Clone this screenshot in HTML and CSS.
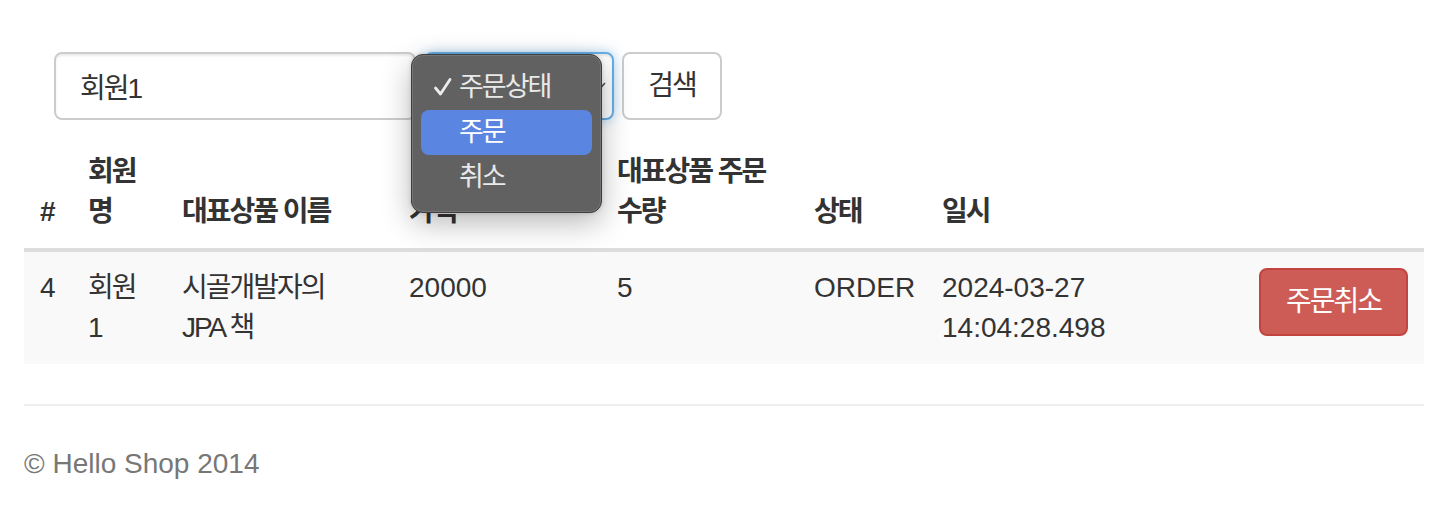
FILE: index.html
```html
<!DOCTYPE html>
<html lang="ko">
<head>
<meta charset="utf-8">
<title>Hello Shop</title>
<link rel="stylesheet" href="styles.css">
</head>
<body>
<div class="page">
  <div class="search">
    <form class="form-inline">
      <input class="form-control input-name ko" type="text" value="회원1">
      <div class="select-wrap">
        <select class="form-control select ko">
          <option>주문상태</option>
          <option>주문</option>
          <option>취소</option>
        </select>
        <svg class="chev" width="12" height="8" viewBox="0 0 12 8"><polyline points="1,1 6,6.5 11,1" fill="none" stroke="#555" stroke-width="1.6"/></svg>
        <div class="menu">
          <div class="menu-item ko">
            <svg class="check" width="20" height="20" viewBox="0 0 20 20"><polyline points="2.5,11 7.5,17 17,2.5" fill="none" stroke="#ececec" stroke-width="2.8" stroke-linecap="round" stroke-linejoin="round"/></svg>
            주문상태
          </div>
          <div class="menu-item active ko">주문</div>
          <div class="menu-item ko">취소</div>
        </div>
      </div>
      <button class="btn btn-default ko" type="button">검색</button>
    </form>
  </div>

  <table class="table">
    <colgroup>
      <col class="c1"><col class="c2"><col class="c3"><col class="c4"><col class="c5"><col class="c6"><col class="c7"><col class="c8">
    </colgroup>
    <thead>
      <tr>
        <th>#</th>
        <th class="ko">회원명</th>
        <th class="ko">대표상품 이름</th>
        <th class="ko">가격</th>
        <th class="ko">대표상품 주문 수량</th>
        <th class="ko">상태</th>
        <th class="ko">일시</th>
        <th></th>
      </tr>
    </thead>
    <tbody>
      <tr>
        <td>4</td>
        <td class="ko narrow">회원1</td>
        <td class="ko narrow">시골개발자의 JPA 책</td>
        <td>20000</td>
        <td>5</td>
        <td>ORDER</td>
        <td>2024-03-27 14:04:28.498</td>
        <td><button class="btn btn-danger ko" type="button">주문취소</button></td>
      </tr>
    </tbody>
  </table>

  <div class="footer">
    <p>© Hello Shop 2014</p>
  </div>
</div>
</body>
</html>
```

FILE: styles.css
```css
* { box-sizing: border-box; }

html, body {
  margin: 0;
  padding: 0;
  background: #fff;
}

body {
  font-family: "Liberation Sans", "Noto Sans CJK KR", Arial, sans-serif;
  font-size: 28px;
  line-height: 40px;
  color: #333;
}

.ko { letter-spacing: -2px; }

.page {
  width: 1400px;
  margin-left: 24px;
}

.search {
  padding: 52px 0 0 30px;
}

.form-inline {
  display: flex;
  align-items: center;
  gap: 8px;
  margin: 0;
}

.form-control {
  height: 68px;
  font-family: inherit;
  font-size: 28px;
  color: #555;
  background: #fff;
  border: 2px solid #ccc;
  border-radius: 8px;
  box-shadow: inset 0 2px 2px rgba(0,0,0,.075);
}

.input-name {
  width: 362px;
  padding: 0 24px;
  color: #333;
}

.select-wrap {
  position: relative;
  width: 190px;
  height: 68px;
}

.select {
  appearance: none;
  -webkit-appearance: none;
  width: 100%;
  padding: 0 24px;
  border-color: #66afe9;
  outline: none;
  box-shadow: inset 0 2px 2px rgba(0,0,0,.075), 0 0 12px rgba(102,175,233,.5);
}

.chev {
  position: absolute;
  right: 8px;
  top: 30px;
}

.menu {
  position: absolute;
  left: -13px;
  top: 2px;
  width: 191px;
  padding: 10px 9px 12px;
  background: #616161;
  border: 1px solid #3e3e3e;
  border-radius: 12px;
  box-shadow: inset 0 0 0 1px rgba(255,255,255,.12), 0 10px 30px rgba(0,0,0,.28), 0 0 4px rgba(0,0,0,.15);
  z-index: 5;
}

.menu-item {
  position: relative;
  height: 45px;
  line-height: 45px;
  padding-left: 38px;
  color: #e9e9e9;
  font-size: 27px;
  border-radius: 8px;
}

.menu-item.active {
  background: #5a86e1;
  color: #fff;
}

.check {
  position: absolute;
  left: 12px;
  top: 12px;
}

.btn {
  height: 68px;
  padding: 0 24px;
  font-family: inherit;
  font-size: 28px;
  line-height: 40px;
  border: 2px solid #ccc;
  border-radius: 8px;
  background: #fff;
  color: #333;
  cursor: pointer;
}

.btn-default {
  width: 100px;
  padding: 0;
}

.btn-danger {
  background: #cd5c57;
  border-color: #c2443f;
  color: #fff;
  width: 149px;
  padding: 0;
}

.table {
  width: 1400px;
  margin-top: 16px;
  margin-bottom: 40px;
  border-collapse: collapse;
  border-spacing: 0;
  table-layout: fixed;
}

.c1 { width: 48px; }
.c2 { width: 94px; }
.c3 { width: 227px; }
.c4 { width: 208px; }
.c5 { width: 197px; }
.c6 { width: 128px; }
.c7 { width: 317px; }
.c8 { width: 181px; }

.table th {
  padding: 16px;
  text-align: left;
  vertical-align: bottom;
  font-weight: bold;
  border-bottom: 4px solid #ddd;
}

.table td {
  padding: 16px;
  vertical-align: top;
  background: #f9f9f9;
}

.table td.narrow {
  padding-right: 26px;
}

.footer {
  border-top: 2px solid #eee;
  padding-top: 38px;
  color: #777;
}

.footer p { margin: 0; }
```
